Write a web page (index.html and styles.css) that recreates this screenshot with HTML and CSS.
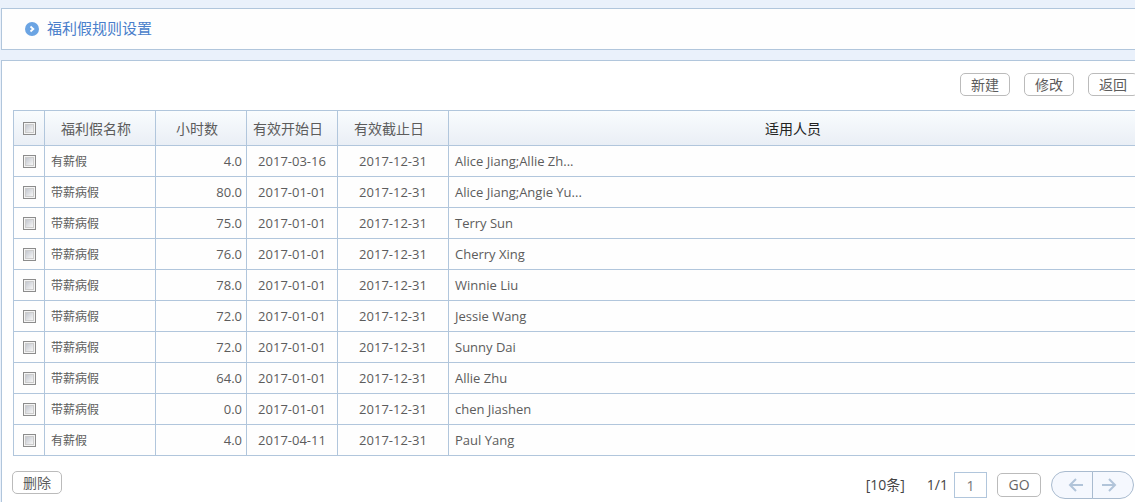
FILE: index.html
```html
<!DOCTYPE html>
<html lang="zh-CN">
<head>
<meta charset="utf-8">
<title>福利假规则设置</title>
<link rel="stylesheet" href="styles.css">
</head>
<body>
<header class="panel title-bar">
  <svg class="title-icon" width="14" height="14" viewBox="0 0 14 14" aria-hidden="true"><circle cx="7" cy="7" r="7" fill="#6ba4e3"/><path d="M5.5 4.5 8.3 7 5.5 9.5" fill="none" stroke="#fff" stroke-width="1.8"/></svg>
  <h1 class="title">福利假规则设置</h1>
</header>
<main class="panel content">
  <div class="toolbar">
    <button class="btn" type="button">新建</button>
    <button class="btn" type="button">修改</button>
    <button class="btn" type="button">返回</button>
  </div>
  <table class="grid">
    <colgroup><col class="c-check"><col class="c-name"><col class="c-hours"><col class="c-start"><col class="c-end"><col></colgroup>
    <thead>
      <tr><th><input class="check" type="checkbox" aria-label="全选"></th><th class="sortable">福利假名称</th><th class="sortable">小时数</th><th class="sortable">有效开始日</th><th class="sortable">有效截止日</th><th class="people">适用人员</th></tr>
    </thead>
    <tbody>
      <tr><td><input class="check" type="checkbox" aria-label="选择第1行"></td><td class="name">有薪假</td><td class="hours">4.0</td><td>2017-03-16</td><td>2017-12-31</td><td class="staff">Alice Jiang;Allie Zh...</td></tr>
      <tr><td><input class="check" type="checkbox" aria-label="选择第2行"></td><td class="name">带薪病假</td><td class="hours">80.0</td><td>2017-01-01</td><td>2017-12-31</td><td class="staff">Alice Jiang;Angie Yu...</td></tr>
      <tr><td><input class="check" type="checkbox" aria-label="选择第3行"></td><td class="name">带薪病假</td><td class="hours">75.0</td><td>2017-01-01</td><td>2017-12-31</td><td class="staff">Terry Sun</td></tr>
      <tr><td><input class="check" type="checkbox" aria-label="选择第4行"></td><td class="name">带薪病假</td><td class="hours">76.0</td><td>2017-01-01</td><td>2017-12-31</td><td class="staff">Cherry Xing</td></tr>
      <tr><td><input class="check" type="checkbox" aria-label="选择第5行"></td><td class="name">带薪病假</td><td class="hours">78.0</td><td>2017-01-01</td><td>2017-12-31</td><td class="staff">Winnie Liu</td></tr>
      <tr><td><input class="check" type="checkbox" aria-label="选择第6行"></td><td class="name">带薪病假</td><td class="hours">72.0</td><td>2017-01-01</td><td>2017-12-31</td><td class="staff">Jessie Wang</td></tr>
      <tr><td><input class="check" type="checkbox" aria-label="选择第7行"></td><td class="name">带薪病假</td><td class="hours">72.0</td><td>2017-01-01</td><td>2017-12-31</td><td class="staff">Sunny Dai</td></tr>
      <tr><td><input class="check" type="checkbox" aria-label="选择第8行"></td><td class="name">带薪病假</td><td class="hours">64.0</td><td>2017-01-01</td><td>2017-12-31</td><td class="staff">Allie Zhu</td></tr>
      <tr><td><input class="check" type="checkbox" aria-label="选择第9行"></td><td class="name">带薪病假</td><td class="hours">0.0</td><td>2017-01-01</td><td>2017-12-31</td><td class="staff">chen Jiashen</td></tr>
      <tr><td><input class="check" type="checkbox" aria-label="选择第10行"></td><td class="name">有薪假</td><td class="hours">4.0</td><td>2017-04-11</td><td>2017-12-31</td><td class="staff">Paul Yang</td></tr>
    </tbody>
  </table>
  <footer class="footer">
    <button class="btn" type="button">删除</button>
    <div class="pager">
      <span class="total">[10条]</span>
      <label class="pages" for="page">1/1</label>
      <input class="page-input" id="page" type="text" value="1">
      <button class="btn go" type="button">GO</button>
      <div class="arrows">
        <button class="arrow" type="button" aria-label="上一页"><svg width="16" height="14" viewBox="0 0 16 14"><path d="M15 7H2M8 1 2 7l6 6" fill="none" stroke="#b1c4d9" stroke-width="2"/></svg></button>
        <button class="arrow" type="button" aria-label="下一页"><svg width="16" height="14" viewBox="0 0 16 14"><path d="M1 7h13M8 1l6 6-6 6" fill="none" stroke="#b1c4d9" stroke-width="2"/></svg></button>
      </div>
    </div>
  </footer>
</main>
</body>
</html>
```
FILE: styles.css
```css
* { box-sizing: border-box; }

body {
  margin: 0;
  padding: 8px 0 0 1px;
  overflow: hidden;
  background: #eaf1fb;
  color: #5c5c5c;
  font: 14px/20px "Open Sans", "Noto Sans CJK SC", sans-serif;
}

button, input { font: inherit; color: inherit; margin: 0; }

.panel {
  margin-right: -4px;
  border: 1px solid #b1c6dc;
  background: #fefefe;
}

.title-bar {
  display: flex;
  align-items: center;
  gap: 8px;
  height: 42px;
  padding: 0 23px;
}

.title { margin: 0; padding-bottom: 2px; color: #4a7fcb; font-size: 15px; font-weight: 400; }

.content {
  margin-top: 10px;
  min-height: calc(100vh - 60px);
  padding: 12px 0 12px 11px;
  background: #fff;
}

.toolbar { display: flex; justify-content: flex-end; gap: 14px; }

.btn {
  width: 50px;
  height: 23px;
  padding: 0;
  border: 1px solid #bbb;
  border-radius: 5px;
  background: #fff;
  line-height: 20px;
}

.grid {
  width: 100%;
  margin-top: 14px;
  border-collapse: collapse;
  table-layout: fixed;
  font-size: 13px;
}

.c-check { width: 31px; }
.c-name, .c-end { width: 111px; }
.c-hours, .c-start { width: 91px; }

.grid th, .grid td {
  height: 31px;
  padding: 0;
  border: 1px solid #b1c6dc;
  text-align: center;
}

.grid td { background: #fefefe; }
.grid thead { background: linear-gradient(#f9fcfe, #e9eef5); }
.grid th { height: 35px; padding-top: 1px; font-size: 14px; font-weight: 400; }
.grid .sortable { padding-right: 8px; }
.grid .people { color: #222; }
.grid .name { padding: 2px 0 0 6px; text-align: left; font-size: 12px; }
.grid .hours { padding-right: 4px; text-align: right; }
.grid .staff { padding-left: 6px; text-align: left; }

.check {
  display: block;
  width: 13px;
  height: 13px;
  margin: 0 auto;
  appearance: none;
  border: 1px solid #8c8c8c;
  background: linear-gradient(135deg, #c4c8d0, #f6f6f6) content-box, #f4f4f4;
  padding: 2px;
  outline: 1px solid #ccc;
  outline-offset: -3px;
}

.check:checked { background: #4a7fcb content-box; }

.footer {
  display: flex;
  justify-content: space-between;
  align-items: flex-start;
  margin: 15px 4px 0 -1px;
}

.pager { display: flex; align-items: center; color: #444; }
.pages { margin-left: 22px; }

.page-input {
  width: 33px;
  height: 26px;
  margin: 0 10px 0 6px;
  padding: 0;
  border: 1px solid #b1c6dc;
  background: #fff;
  color: #777;
  text-align: center;
}

.go { width: 44px; height: 24px; color: #666; }
.arrows { display: flex; margin-left: 10px; }

.arrow {
  display: grid;
  place-items: center;
  width: 42px;
  height: 28px;
  padding: 0 0 0 8px;
  border: 1px solid #a9bbcf;
  border-radius: 14px 0 0 14px;
  background: #f5f8fe;
}

.arrow + .arrow {
  margin-left: -1px;
  padding: 0 8px 0 0;
  border-radius: 0 14px 14px 0;
}
```
